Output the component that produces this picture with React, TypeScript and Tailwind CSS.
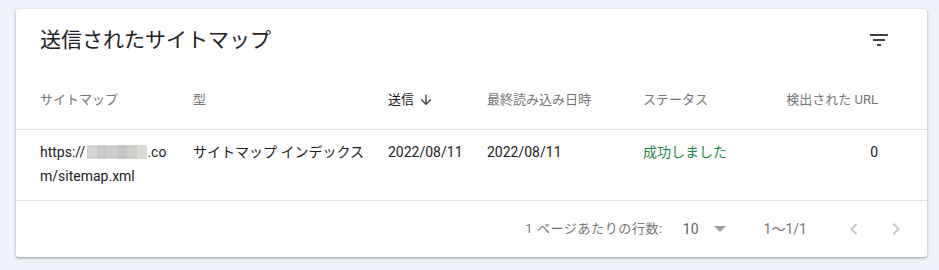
import React from "react";

const font = { fontFamily: "Roboto, 'Noto Sans CJK JP', sans-serif" };

function Blur() {
  const shades = ["#d6d6d6", "#c9c9c9", "#cfcfcf", "#c6c6c6", "#cdd0cc", "#d9d9d5"];
  return (
    <span className="inline-flex h-[14px] align-middle ml-[2px] -translate-y-[1px]">
      {shades.map((c, i) => (
        <span key={i} className="block h-full w-[10px]" style={{ background: c }} />
      ))}
    </span>
  );
}

export default function App() {
  return (
    <div className="w-[939px] h-[270px] bg-[#f0f3fa] pt-[9px] pl-4" style={font}>
      <div className="w-[911px] h-[248px] bg-white rounded-[3px] shadow-[0_1px_2px_rgba(60,64,67,0.3),0_1px_3px_1px_rgba(60,64,67,0.15)] flex flex-col">
        {/* Title */}
        <div className="h-[62px] flex items-center justify-between pl-6 pr-[36px]">
          <div className="text-[21px] text-[#202124] leading-8">送信されたサイトマップ</div>
          <svg width="24" height="24" viewBox="0 0 24 24" className="fill-[#3c4043]">
            <path d="M10 18h4v-2h-4v2zM3 6v2h18V6H3zm3 7h12v-2H6v2z" />
          </svg>
        </div>
        {/* Header */}
        <div className="h-[59px] grid grid-cols-[153px_195px_99px_156px_1fr_120px] items-center px-6 border-b border-[#e0e0e0] text-[13px] text-[#757575]">
          <div>サイトマップ</div>
          <div>型</div>
          <div className="flex items-center text-[#202124]">
            送信
            <svg width="16" height="16" viewBox="0 0 24 24" className="ml-[4px] fill-[#3c4043]">
              <path d="M20 12l-1.41-1.41L13 16.17V4h-2v12.17l-5.58-5.59L4 12l8 8 8-8z" />
            </svg>
          </div>
          <div>最終読み込み日時</div>
          <div>ステータス</div>
          <div className="text-right pr-[25px]">検出された URL</div>
        </div>
        {/* Row */}
        <div className="grid grid-cols-[153px_195px_99px_156px_1fr_120px] px-6 pt-[10px] pb-[12px] border-b border-[#e0e0e0] text-[14px] leading-6 text-[#202124]">
          <div>
            <div>
              https://<Blur />.co
            </div>
            <div>m/sitemap.xml</div>
          </div>
          <div>サイトマップ インデックス</div>
          <div>2022/08/11</div>
          <div>2022/08/11</div>
          <div className="text-[#1b8a4a]">成功しました</div>
          <div className="text-right pr-[25px]">0</div>
        </div>
        {/* Footer */}
        <div className="flex-1 flex items-center justify-end pr-[19px] text-[13px] text-[#757575]">
          <span className="tracking-[0.6px]">1 ページあたりの行数:</span>
          <span className="ml-[20px] text-[#5f6368] text-[14px]">10</span>
          <svg width="12" height="6" viewBox="0 0 12 6" className="ml-[15px] fill-[#9aa0a6]">
            <path d="M0 0h12L6 6z" />
          </svg>
          <span className="ml-[38px] text-[14px]">1〜1/1</span>
          <svg width="24" height="24" viewBox="0 0 24 24" className="ml-[35px] fill-[#c4c7c5]">
            <path d="M15.41 7.41L14 6l-6 6 6 6 1.41-1.41L10.83 12z" />
          </svg>
          <svg width="24" height="24" viewBox="0 0 24 24" className="ml-[18px] fill-[#c4c7c5]">
            <path d="M10 6L8.59 7.41 13.17 12l-4.58 4.59L10 18l6-6z" />
          </svg>
        </div>
      </div>
    </div>
  );
}
